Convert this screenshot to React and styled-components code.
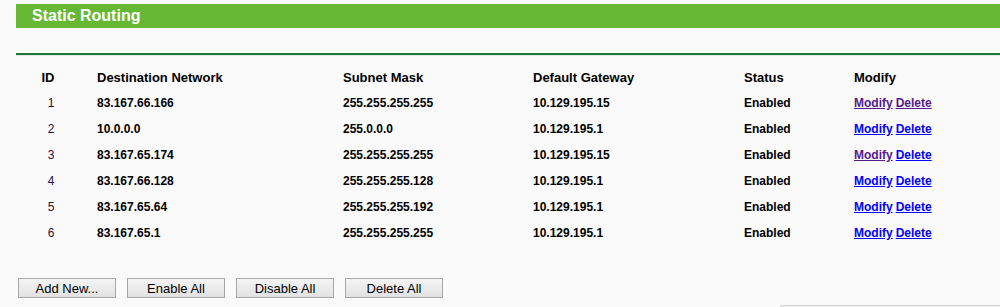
import styled, { createGlobalStyle } from "styled-components";

const GlobalStyle = createGlobalStyle`
  body {
    margin: 0;
    background: #fafafa;
    font-family: "Liberation Sans", Arial, sans-serif;
  }
`;

const Page = styled.div`
  padding-left: 16px;
  padding-top: 4px;
  overflow: hidden;
`;

const TitleBar = styled.div`
  height: 24px;
  background-color: #66b834;
  color: white;
  font-size: 16px;
  font-weight: bold;
  line-height: 24px;
  padding-left: 16px;
`;

const Divider = styled.div`
  margin-top: 25px;
  height: 2px;
  background-color: #137a3c;
  box-shadow: 0 1px 0 #e4e4e4;
`;

const Table = styled.div`
  margin-top: 10px;
`;

const Row = styled.div`
  display: grid;
  grid-template-columns: 81px 246px 190px 211px 110px 1fr;
  align-items: center;
  height: ${(p) => (p.head ? "25px" : "26px")};
  font-size: ${(p) => (p.head ? "13px" : "12px")};
  font-weight: bold;
  color: #000;
`;

const IdCell = styled.div`
  text-align: center;
  padding-right: ${(p) => (p.head ? "17px" : "11px")};
  font-weight: ${(p) => (p.head ? "bold" : "normal")};
  color: ${(p) => (p.head ? "#000" : "#1a1040")};
`;

const Cell = styled.div`
  white-space: nowrap;
`;

const Link = styled.a`
  color: ${(p) => (p.visited ? "#551a8b" : "#0000ff")};
  text-decoration: underline;
  cursor: pointer;
  margin-right: 3px;
`;

const Buttons = styled.div`
  display: flex;
  gap: 11px;
  margin-top: 32px;
  padding-left: 2px;
`;

const Button = styled.button`
  width: 98px;
  height: 20px;
  padding: 0;
  border: 1px solid #a8a8a8;
  background: linear-gradient(#f4f4f4, #e2e2e2);
  font-family: "Liberation Sans", Arial, sans-serif;
  font-size: 13px;
  color: #000;
  cursor: pointer;
`;

const Footer = styled.div`
  margin-top: 7px;
  margin-left: 764px;
  height: 2px;
  border-top: 1px solid #d6d6d6;
  background: #ececec;
`;

const routes = [
  { id: 1, dest: "83.167.66.166", mask: "255.255.255.255", gw: "10.129.195.15", mod: true, del: true },
  { id: 2, dest: "10.0.0.0", mask: "255.0.0.0", gw: "10.129.195.1" },
  { id: 3, dest: "83.167.65.174", mask: "255.255.255.255", gw: "10.129.195.15", mod: true },
  { id: 4, dest: "83.167.66.128", mask: "255.255.255.128", gw: "10.129.195.1" },
  { id: 5, dest: "83.167.65.64", mask: "255.255.255.192", gw: "10.129.195.1" },
  { id: 6, dest: "83.167.65.1", mask: "255.255.255.255", gw: "10.129.195.1" },
];

const App = () => {
  return (
    <Page>
      <GlobalStyle />
      <TitleBar>Static Routing</TitleBar>
      <Divider />
      <Table>
        <Row head>
          <IdCell head>ID</IdCell>
          <Cell>Destination Network</Cell>
          <Cell>Subnet Mask</Cell>
          <Cell>Default Gateway</Cell>
          <Cell>Status</Cell>
          <Cell>Modify</Cell>
        </Row>
        {routes.map((r) => (
          <Row key={r.id}>
            <IdCell>{r.id}</IdCell>
            <Cell>{r.dest}</Cell>
            <Cell>{r.mask}</Cell>
            <Cell>{r.gw}</Cell>
            <Cell>Enabled</Cell>
            <Cell>
              <Link visited={r.mod}>Modify</Link>
              <Link visited={r.del}>Delete</Link>
            </Cell>
          </Row>
        ))}
      </Table>
      <Buttons>
        <Button>Add New...</Button>
        <Button>Enable All</Button>
        <Button>Disable All</Button>
        <Button>Delete All</Button>
      </Buttons>
      <Footer />
    </Page>
  );
};

export default App;
